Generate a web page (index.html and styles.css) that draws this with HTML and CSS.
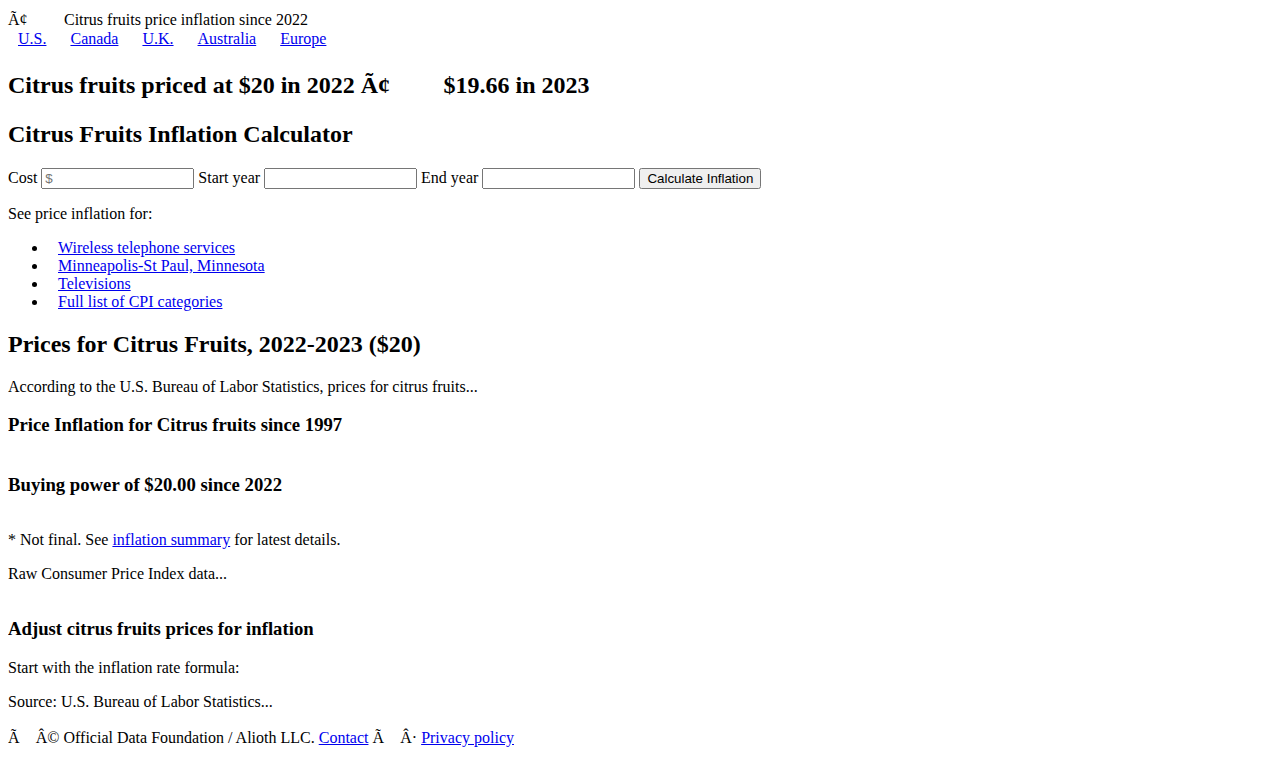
FILE: index.html
```html
<!DOCTYPE html>
<html lang="en">
<head>
<meta charset="utf-8">
<title>Citrus fruits price inflation since 2022</title>
<link rel="stylesheet" href="styles.css">
</head>
<body>
<div class="topline">Ã¢<span class="ctl ctl-dash"></span> Citrus fruits price inflation since 2022</div>
<div class="nav"><a class="nav-link" href="#">U.S.</a> <a class="nav-link" href="#">Canada</a> <a class="nav-link" href="#">U.K.</a> <a class="nav-link" href="#">Australia</a> <a class="nav-link" href="#">Europe</a></div>
<h2>Citrus fruits priced at $20 in 2022 Ã¢<span class="ctl ctl-dash"></span> $19.66 in 2023</h2>
<h2>Citrus Fruits Inflation Calculator</h2>
<form class="calc">
<label>Cost <input class="field" type="text" placeholder="$"></label>
<label>Start year <input class="field" type="text"></label>
<label>End year <input class="field" type="text"></label>
<button type="button">Calculate Inflation</button>
</form>
<p>See price inflation for:</p>
<ul class="links">
<li><a href="#">Wireless telephone services</a></li>
<li><a href="#">Minneapolis-St Paul, Minnesota</a></li>
<li><a href="#">Televisions</a></li>
<li><a href="#">Full list of CPI categories</a></li>
</ul>
<h2>Prices for Citrus Fruits, 2022-2023 ($20)</h2>
<p>According to the U.S. Bureau of Labor Statistics, prices for citrus fruits...</p>
<h3>Price Inflation for Citrus fruits since 1997</h3>
<div class="chart"></div>
<h3>Buying power of $20.00 since 2022</h3>
<div class="chart"></div>
<p>* Not final. See <a href="#">inflation summary</a> for latest details.</p>
<p>Raw Consumer Price Index data...</p>
<div class="chart"></div>
<h3>Adjust citrus fruits prices for inflation</h3>
<p>Start with the inflation rate formula:</p>
<p>Source: U.S. Bureau of Labor Statistics...</p>
<p class="footer">Ã<span class="ctl ctl-a"></span>Â© Official Data Foundation / Alioth LLC. <a href="#">Contact</a> Ã<span class="ctl ctl-a"></span>Â· <a href="#">Privacy policy</a></p>
</body>
</html>
```
FILE: styles.css
```css
body {
  margin: 8px;
  font-family: "Liberation Serif", "Times New Roman", serif;
  font-size: 16px;
  color: #000;
  background: #fff;
}
a { color: #0000ee; }
.topline { padding-top: 1px; }
.nav { padding-bottom: 2px; }
.ctl { letter-spacing: 0.2em; }
.ctl-dash::before { content: "\80\94"; }
.ctl-a::before { content: "\82"; }
.nav-link { padding: 0 10px; }
.field { width: 153px; box-sizing: border-box; }
.links li { padding-left: 10px; }
.chart { height: 0.3px; }
```
